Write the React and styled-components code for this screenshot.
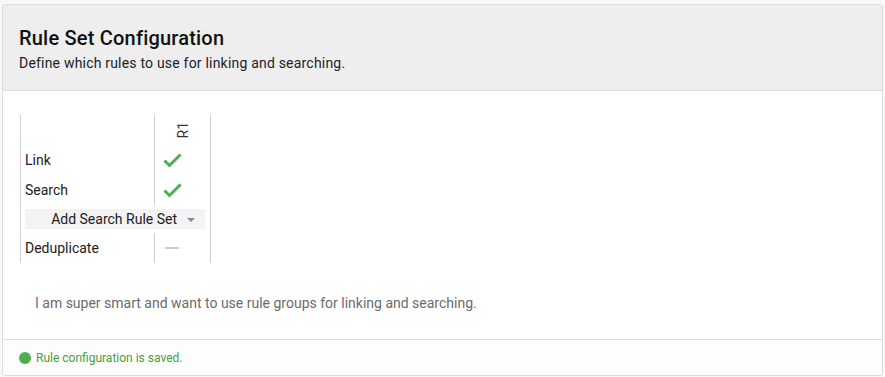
import React from 'react';
import styled, { createGlobalStyle } from 'styled-components';

const GlobalStyle = createGlobalStyle`
  html, body {
    margin: 0;
    background: #f8f8f8;
  }
  body {
    padding: 4px 2px 1px 2px;
    font-family: Roboto, "Liberation Sans", Arial, sans-serif;
    color: #212121;
  }
  * {
    box-sizing: border-box;
  }
`;

const Card = styled.div`
  display: flex;
  flex-direction: column;
  width: 881px;
  height: 372px;
  background: #ffffff;
  border: 1px solid #dcdcdc;
  border-radius: 3px;
  overflow: hidden;
`;

const Header = styled.div`
  background: #eeeeee;
  border-bottom: 1px solid #dcdcdc;
  padding: 21px 16px 0 16px;
  height: 86px;
  flex-shrink: 0;
`;

const Title = styled.h2`
  margin: 0;
  font-size: 20px;
  font-weight: 500;
  line-height: 24px;
  letter-spacing: 0.2px;
  color: #111;
`;

const Subtitle = styled.div`
  margin-top: 3px;
  font-size: 14px;
  line-height: 20px;
  letter-spacing: 0.2px;
  color: #222;
`;

const Body = styled.div`
  flex: 1;
  padding: 24px 17px 0 17px;
`;

const RuleGrid = styled.div`
  display: grid;
  grid-template-columns: 133px 56px;
  width: 191px;
  border-left: 1px solid #d0d0d0;
  border-right: 1px solid #d0d0d0;
`;

const Label = styled.div`
  display: flex;
  align-items: center;
  height: 30px;
  padding-left: 4px;
  font-size: 14px;
  color: #212121;
`;

const Cell = styled.div`
  display: flex;
  align-items: center;
  justify-content: ${(p) => (p.$center ? 'center' : 'flex-start')};
  height: 30px;
  padding-left: ${(p) => (p.$center ? '0' : '8px')};
  border-left: 1px solid #d0d0d0;
`;

const RotatedHead = styled.span`
  writing-mode: vertical-rl;
  transform: rotate(180deg);
  font-size: 14px;
  color: #333;
`;

const AddRow = styled.div`
  grid-column: 1 / span 2;
  padding: 4px 5px 4px 4px;
`;

const AddButton = styled.div`
  display: flex;
  align-items: center;
  justify-content: flex-end;
  gap: 10px;
  height: 20px;
  padding-right: 10px;
  background: #f3f3f3;
  font-size: 14px;
  color: #212121;
`;

const Caret = styled.span`
  width: 0;
  height: 0;
  border-left: 4px solid transparent;
  border-right: 4px solid transparent;
  border-top: 4px solid #888;
  margin-top: 2px;
`;

const Dash = styled.span`
  display: block;
  width: 14px;
  height: 2px;
  margin-left: 2px;
  background: #cfcfcf;
`;

const Note = styled.p`
  margin: 30px 0 0 15px;
  font-size: 14px;
  line-height: 20px;
  color: #6b6b6b;
`;

const Footer = styled.div`
  display: flex;
  align-items: center;
  gap: 5px;
  height: 36px;
  flex-shrink: 0;
  padding-left: 16px;
  border-top: 1px solid #dcdcdc;
  background: #fdfdfd;
`;

const Dot = styled.span`
  width: 12px;
  height: 12px;
  border-radius: 50%;
  background: #4caf50;
`;

const Status = styled.span`
  font-size: 12px;
  color: #4a9e3c;
`;

const Check = () => (
  <svg width="19" height="16" viewBox="0 0 19 16">
    <polyline
      points="1.5,8.5 6.5,13.5 17.5,2.5"
      fill="none"
      stroke="#4caf50"
      strokeWidth="3"
    />
  </svg>
);

const rows = [
  { name: 'Link', enabled: true },
  { name: 'Search', enabled: true, addAfter: true },
  { name: 'Deduplicate', enabled: false }
];

const App = () => {
  return (
    <>
      <GlobalStyle />
      <Card>
        <Header>
          <Title>Rule Set Configuration</Title>
          <Subtitle>Define which rules to use for linking and searching.</Subtitle>
        </Header>
        <Body>
          <RuleGrid>
            <Label />
            <Cell $center>
              <RotatedHead>R1</RotatedHead>
            </Cell>
            {rows.map((row) => (
              <React.Fragment key={row.name}>
                <Label>{row.name}</Label>
                <Cell>{row.enabled ? <Check /> : <Dash />}</Cell>
                {row.addAfter && (
                  <AddRow>
                    <AddButton>
                      Add Search Rule Set
                      <Caret />
                    </AddButton>
                  </AddRow>
                )}
              </React.Fragment>
            ))}
          </RuleGrid>
          <Note>I am super smart and want to use rule groups for linking and searching.</Note>
        </Body>
        <Footer>
          <Dot />
          <Status>Rule configuration is saved.</Status>
        </Footer>
      </Card>
    </>
  );
};

export default App;
